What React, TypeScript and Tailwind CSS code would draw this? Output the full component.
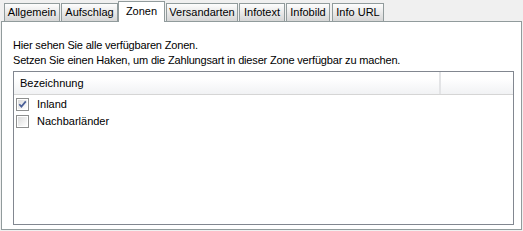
import React from 'react';

const tabs = [
  { label: 'Allgemein', w: 'w-[56px]', ml: 'ml-[3px]' },
  { label: 'Aufschlag', w: 'w-[57px]', ml: 'ml-px' },
  { label: 'Zonen', w: 'w-[47px]', ml: 'ml-0', active: true },
  { label: 'Versandarten', w: 'w-[72px]', ml: 'ml-px' },
  { label: 'Infotext', w: 'w-[46px]', ml: 'ml-px' },
  { label: 'Infobild', w: 'w-[44px]', ml: 'ml-px' },
  { label: 'Info URL', w: 'w-[52px]', ml: 'ml-[2px]' },
];

const zones = [
  { name: 'Inland', checked: true },
  { name: 'Nachbarländer', checked: false },
];

function CheckBox({ checked }: { checked: boolean }) {
  return (
    <svg width="13" height="13" viewBox="0 0 13 13" className="shrink-0">
      <defs>
        <linearGradient id={`cb-${checked ? 'on' : 'off'}`} x1="0" y1="0" x2="1" y2="1">
          <stop offset="0" stopColor="#dcdcdc" />
          <stop offset="1" stopColor="#ffffff" />
        </linearGradient>
      </defs>
      <rect x="0.5" y="0.5" width="12" height="12" fill="#ffffff" stroke="#8e8f8f" />
      <rect x="2" y="2" width="9" height="9" fill={`url(#cb-${checked ? 'on' : 'off'})`} />
      {checked && (
        <path d="M3.3 6.2 L5.4 8.6 L9.8 3.4" fill="none" stroke="#4a5f97" strokeWidth="1.7" />
      )}
    </svg>
  );
}

export default function App() {
  return (
    <div
      className="w-[523px] h-[231px] bg-[#f0f0f0] text-[11px] text-black overflow-hidden"
      style={{ fontFamily: '"Liberation Sans", Arial, sans-serif' }}
    >
      <div className="flex items-end h-[21px] pl-px">
        {tabs.map((t) =>
          t.active ? (
            <div
              key={t.label}
              className={`${t.w} ${t.ml} h-[21px] -mb-px relative z-10 bg-white border border-b-0 border-[#919b9c] flex items-center justify-center pb-[2px]`}
            >
              {t.label}
            </div>
          ) : (
            <div
              key={t.label}
              className={`${t.w} ${t.ml} h-[18px] bg-gradient-to-b from-[#fdfdfd] to-[#d6d6d6] border border-b-0 border-[#919b9c] flex items-center justify-center`}
            >
              {t.label}
            </div>
          ),
        )}
      </div>
      <div className="ml-px w-[521px] h-[209px] bg-white border border-[#919b9c] flex flex-col pl-[11px] pt-[17px]">
        <p className="leading-[13px] tracking-[-0.17px]">Hier sehen Sie alle verfügbaren Zonen.</p>
        <p className="leading-[13px] mt-[2px] tracking-[-0.17px]">
          Setzen Sie einen Haken, um die Zahlungsart in dieser Zone verfügbar zu machen.
        </p>
        <div className="mt-[4px] w-[501px] h-[154px] border border-[#828790] flex flex-col">
          <div className="h-[23px] flex bg-gradient-to-b from-white from-30% to-[#f1f2f4] border-b border-[#d5d5d5]">
            <div className="w-[427px] border-r-2 border-[#e3e4e6] flex items-center pl-[6px]">
              Bezeichnung
            </div>
            <div className="flex-1" />
          </div>
          <div className="flex flex-col pt-[1px] pl-[2px]">
            {zones.map((z) => (
              <div key={z.name} className="h-[17px] flex items-center gap-[8px]">
                <CheckBox checked={z.checked} />
                <span>{z.name}</span>
              </div>
            ))}
          </div>
        </div>
      </div>
    </div>
  );
}
